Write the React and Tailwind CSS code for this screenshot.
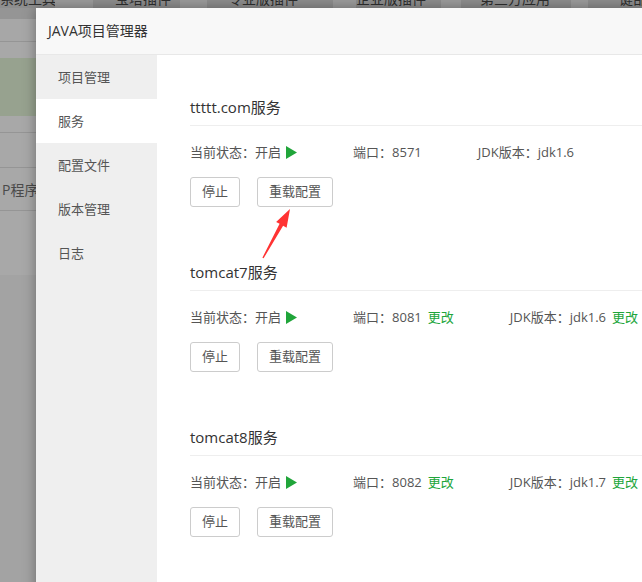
import React from 'react';

const FONT = "font-['Open_Sans','Noto_Sans_CJK_SC',sans-serif]";

const TABS = [
  { w: 'w-[55px]', dark: true, label: '系统工具', pl: 'pl-0' },
  { w: 'w-[38px]' },
  { w: 'w-[87px]', dark: true, label: '宝塔插件', pl: 'pl-[22px]' },
  { w: 'w-[27px]' },
  { w: 'w-[126px]', dark: true, label: '专业版插件', pl: 'pl-[21px]' },
  { w: 'w-[23px]' },
  { w: 'w-[85px]', dark: true, label: '企业版插件', pl: 'pl-0' },
  { w: 'w-[20px]' },
  { w: 'w-[110px]', dark: true, label: '第三方应用', pl: 'pl-[19px]' },
  { w: 'w-[17px]' },
  { w: 'w-[60px]', dark: true, label: '一键部署', pl: 'pl-[17px]' },
];

const MENU = ['项目管理', '服务', '配置文件', '版本管理', '日志'];

const SERVICES = [
  { name: 'ttttt.com服务', port: '8571', jdk: 'jdk1.6', editable: false },
  { name: 'tomcat7服务', port: '8081', jdk: 'jdk1.6', editable: true },
  { name: 'tomcat8服务', port: '8082', jdk: 'jdk1.7', editable: true },
];

function PlayIcon() {
  return (
    <svg width="11" height="13" viewBox="0 0 11 13" className="inline-block ml-[5px] -mt-[2px] align-middle">
      <path d="M0 0 L11 6.5 L0 13 Z" fill="#20a53a" />
    </svg>
  );
}

function Edit() {
  return <span className="ml-[6px] text-[#20a53a]">更改</span>;
}

function ServiceBlock({ service }) {
  return (
    <div className="mb-[48px]">
      <div className="h-[36px] leading-[35px] border-b border-[#eeeeee] text-[15px] text-[#333]">
        {service.name}
      </div>
      <div className="mt-[16px] leading-[20px] text-[13px] text-[#555] whitespace-nowrap">
        <span className="mr-[56px]">
          当前状态：开启
          <PlayIcon />
        </span>
        <span className="mr-[56px]">
          端口：{service.port}
          {service.editable && <Edit />}
        </span>
        <span>
          JDK版本：{service.jdk}
          {service.editable && <Edit />}
        </span>
      </div>
      <div className="mt-[15px] flex gap-[17px]">
        <button className="h-[30px] px-[11px] border border-[#cccccc] rounded-[3px] bg-white text-[13px] text-[#555]">
          停止
        </button>
        <button className="h-[30px] px-[11px] border border-[#cccccc] rounded-[3px] bg-white text-[13px] text-[#555]">
          重载配置
        </button>
      </div>
    </div>
  );
}

export default function App() {
  return (
    <div className={`relative w-[642px] h-[582px] overflow-hidden bg-[#a3a3a3] ${FONT}`}>
      {/* dimmed page behind the dialog */}
      <div className="h-[8px] overflow-hidden flex">
        {TABS.map((t, i) => (
          <div
            key={i}
            className={`${t.w} shrink-0 h-[8px] ${t.dark ? 'bg-[#8e8e8e]' : 'bg-[#9c9c9c]'}`}
          >
            {t.label && (
              <div className={`-mt-[11px] leading-[20px] text-[14px] text-[#2e2e2e] whitespace-nowrap ${t.pl}`}>
                {t.label}
              </div>
            )}
          </div>
        ))}
      </div>
      <div className="flex flex-col">
        <div className="h-[11px] bg-[#959595]" />
        <div className="h-[23px] bg-[#a7a7a7] border-b border-[#959595]" />
        <div className="h-[16px] bg-[#a8a8a8]" />
        <div className="h-[58px] bg-[#97a28f]" />
        <div className="h-[17px] bg-[#a8a8a8] border-b border-[#959595]" />
        <div className="h-[35px] bg-[#a8a8a8] border-b border-[#959595]" />
        <div className="h-[43px] bg-[#a8a8a8] border-b border-[#959595] pl-[2px] leading-[43px] text-[14px] text-[#4a4a4a] whitespace-nowrap">
          P程序
        </div>
        <div className="h-[64px] bg-[#a8a8a8]" />
      </div>

      {/* dialog */}
      <div className="absolute left-[36px] top-[8px] w-[700px] h-[600px] bg-white shadow-[0_0_12px_rgba(0,0,0,0.35)] flex flex-col">
        <div className="h-[47px] shrink-0 bg-[#f8f8f8] border-b border-[#e8e8e8] pl-[12px] leading-[46px] text-[14px] text-[#333]">
          JAVA项目管理器
        </div>
        <div className="flex flex-1">
          <div className="w-[121px] shrink-0 bg-[#efefef]">
            {MENU.map((m) => (
              <div
                key={m}
                className={`h-[44px] leading-[44px] pl-[22px] text-[13px] text-[#555] ${m === '服务' ? 'bg-white' : ''}`}
              >
                {m}
              </div>
            ))}
          </div>
          <div className="flex-1 pl-[33px] pt-[35px]">
            {SERVICES.map((s) => (
              <ServiceBlock key={s.name} service={s} />
            ))}
          </div>
        </div>
      </div>

      {/* red annotation arrow */}
      <svg className="absolute left-0 top-0 pointer-events-none" width="642" height="582">
        <polygon
          points="290,209 286.6,227.7 283.1,225.8 263.6,258.3 262.4,257.7 279.6,223.8 276.1,221.9"
          fill="#ff3333"
        />
      </svg>
    </div>
  );
}
